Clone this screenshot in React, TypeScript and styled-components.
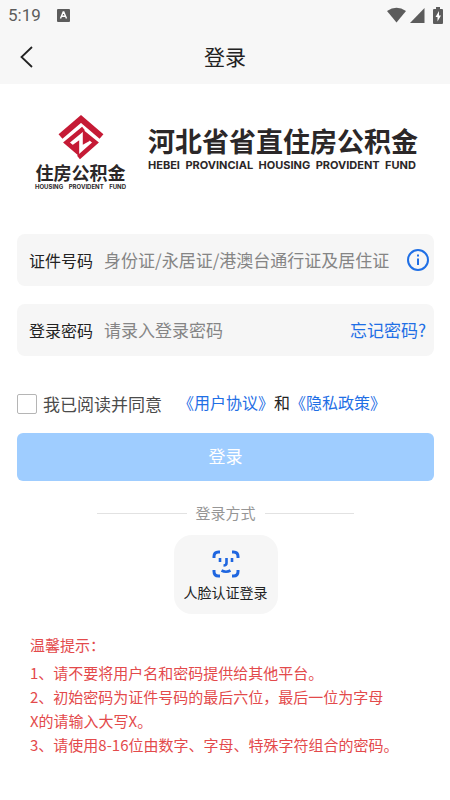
import React from "react";
import styled, { createGlobalStyle } from "styled-components";

const GlobalStyle = createGlobalStyle`
  * { box-sizing: border-box; }
  body {
    margin: 0;
    background: #fff;
    color: #222;
    font-family: "Noto Sans CJK SC", "Noto Sans", sans-serif;
  }
  button, input { font-family: inherit; }
`;

const Page = styled.div`
  display: flex;
  flex-direction: column;
`;

const Header = styled.header`
  background: #f7f7f7;
`;

const StatusBar = styled.div`
  display: flex;
  align-items: center;
  height: 30px;
  padding: 0 7px 0 8px;
  color: #5c5c5c;
`;

const Clock = styled.span`
  margin-right: 16px;
  font: 17px/20px Roboto, sans-serif;
`;

const StatusIcons = styled.div`
  display: flex;
  align-items: center;
  gap: 4px;
  margin-left: auto;
`;

const NavBar = styled.div`
  display: grid;
  grid-template-columns: 54px 1fr 54px;
  align-items: center;
  height: 54px;
`;

const BackButton = styled.button`
  display: flex;
  padding: 8px 19px;
  border: 0;
  background: none;
  color: #222;
`;

const Title = styled.h1`
  margin: 0;
  padding-bottom: 2px;
  text-align: center;
  font-size: 21px;
  line-height: 28px;
  font-weight: 400;
`;

const Brand = styled.section`
  display: flex;
  align-items: flex-start;
  gap: 22px;
  padding: 30px 34px 0 35px;
  color: #2b2728;
`;

const Emblem = styled.div`
  display: flex;
  flex: none;
  flex-direction: column;
  align-items: center;
  width: 91px;
`;

const EmblemName = styled.div`
  margin-bottom: 2px;
  font-size: 18px;
  line-height: 20px;
  font-weight: 700;
`;

const Words = styled.div<{ $small?: boolean }>`
  display: flex;
  justify-content: space-between;
  width: 100%;
  font-family: Inter, sans-serif;
  font-size: ${(p) => (p.$small ? "6px" : "11px")};
  line-height: ${(p) => (p.$small ? "6px" : "12px")};
  font-weight: 700;
`;

const Wordmark = styled.div`
  flex: none;
  width: 268px;
  padding-top: 11px;
`;

const WordmarkName = styled.div`
  margin-bottom: 2px;
  font-size: 27px;
  line-height: 32px;
  font-weight: 700;
  white-space: nowrap;
`;

const Form = styled.form`
  display: flex;
  flex-direction: column;
  padding: 44px 16px 0 17px;
`;

const Field = styled.div`
  display: flex;
  align-items: center;
  height: 52px;
  margin-bottom: 18px;
  padding: 0 4px 0 12px;
  border-radius: 8px;
  background: #f6f6f6;
`;

const FieldLabel = styled.label`
  flex: none;
  width: 75px;
  font-size: 16px;
  line-height: 24px;
`;

const FieldInput = styled.input`
  flex: 1;
  min-width: 0;
  padding: 0;
  border: 0;
  outline: 0;
  background: none;
  font-size: 17px;
  line-height: 26px;
  &::placeholder { color: #858585; opacity: 1; }
`;

const InfoButton = styled.button`
  display: flex;
  padding: 0;
  border: 0;
  background: none;
`;

const Link = styled.a<{ $large?: boolean }>`
  color: #1f6fe5;
  font-size: ${(p) => (p.$large ? "17px" : "16px")};
  line-height: 24px;
  text-decoration: none;
`;

const ForgotLink = styled(Link)`
  margin-right: 4px;
`;

const Agreement = styled.div`
  display: flex;
  align-items: center;
  height: 28px;
  margin: 16px 0 15px;
`;

const Checkbox = styled.input`
  appearance: none;
  flex: none;
  width: 20px;
  height: 20px;
  margin: 0 6px 0 0;
  border: 1px solid #b5b5b5;
  border-radius: 2px;
  background: #fff;
  &:checked { background: #1f6fe5; }
`;

const AgreeLabel = styled.label`
  color: #4b4b4b;
  font-size: 17px;
  line-height: 26px;
`;

const Policies = styled.span`
  align-self: flex-start;
  margin-left: 16px;
  font-size: 16px;
  line-height: 24px;
  white-space: nowrap;
`;

const SubmitButton = styled.button`
  height: 48px;
  padding: 0 0 2px;
  border: 0;
  border-radius: 6px;
  background: #9fcdff;
  color: #fff;
  font-size: 17px;
  line-height: 26px;
`;

const Divider = styled.div`
  display: flex;
  align-items: center;
  gap: 9px;
  margin: 20px 80px 10px;
  color: #969696;
  font-size: 15px;
  line-height: 24px;
  white-space: nowrap;
  &::before, &::after {
    content: "";
    flex: 1;
    height: 1px;
    background: #e2e2e2;
  }
`;

const FaceButton = styled.button`
  display: flex;
  flex-direction: column;
  align-items: center;
  align-self: center;
  gap: 4px;
  width: 104px;
  height: 79px;
  padding: 15px 0 0;
  border: 0;
  border-radius: 18px;
  background: #f6f6f6;
  color: #222;
  font-size: 14px;
  line-height: 20px;
`;

const Tips = styled.section`
  padding: 19px 30px 24px;
  color: #e34a4b;
  font-size: 15px;
  line-height: 24px;
`;

const TipsTitle = styled.h2`
  margin: 0 0 4px;
  font-size: 15px;
  line-height: 24px;
  font-weight: 400;
`;

const Tip = styled.p`
  margin: 0;
`;

const KeyboardIcon = () => (
  <svg width="13" height="13" viewBox="0 0 13 13" aria-hidden="true">
    <rect width="13" height="13" rx="1" fill="#5c5c5c" />
    <path d="M3.5 9.5 6.2 3h.6l2.7 6.5M4.7 7.3h3.6" fill="none" stroke="#fff" strokeWidth="1.4" />
  </svg>
);

const WifiIcon = () => (
  <svg width="19" height="16" viewBox="0 0 19 16" fill="currentColor" aria-hidden="true">
    <path d="M0 4Q9.5-2.5 19 4L9.5 15.5Z" />
  </svg>
);

const SignalIcon = () => (
  <svg width="15" height="15" viewBox="0 0 15 15" fill="currentColor" aria-hidden="true">
    <path d="M14.5 0V15H0Z" />
  </svg>
);

const BatteryIcon = () => (
  <svg width="10" height="17" viewBox="0 0 10 17" aria-hidden="true">
    <path d="M3 0h4v2h2q1 0 1 1v13q0 1-1 1H1q-1 0-1-1V3q0-1 1-1h2Z" fill="#5c5c5c" />
    <path d="M6 4 2.500 10h2v4.500L8 8.500H6Z" fill="#fff" />
  </svg>
);

const BackIcon = () => (
  <svg width="16" height="22" viewBox="0 0 16 22" fill="none" stroke="currentColor" strokeWidth="1.8" aria-hidden="true">
    <path d="M13 1 2.500 11 13 21" />
  </svg>
);

const EmblemIcon = () => (
  <svg width="46" height="48" viewBox="0 0 46 48" fill="none" stroke="#c51a35" strokeWidth="4.4" aria-hidden="true">
    <path d="M2.500 22.500 23 5 43.500 22.500" strokeWidth="6" />
    <path d="M25.500 14.500 8.500 28.500 19 37.500V30.500L15.500 33" />
    <path d="M20.500 43.500 37.500 28.500 27 20V27L30.500 25" />
  </svg>
);

const InfoIcon = () => (
  <svg width="24" height="24" viewBox="0 0 24 24" fill="none" stroke="#1f6fe5" strokeWidth="2" aria-hidden="true">
    <circle cx="12" cy="12" r="10" />
    <path d="M12 10.500V17M12 6.500V8.500" />
  </svg>
);

const FaceIcon = () => (
  <svg width="28" height="28" viewBox="0 0 28 28" fill="none" stroke="#1f66e0" strokeWidth="3" aria-hidden="true">
    <path d="M2 8V6.500Q2 2 6.500 2H8M20 2H21.500Q26 2 26 6.500V8M26 20V21.500Q26 26 21.500 26H20M8 26H6.500Q2 26 2 21.500V20" />
    <path d="M8 8V12M20 8V12M14.500 8V13Q14.500 15.500 11.500 15.500" strokeWidth="2.600" />
    <path d="M9.500 20.500Q14 23 18.500 20.500" strokeWidth="2.600" />
  </svg>
);

const LatinWords = ({ text, small }: { text: string; small?: boolean }) => (
  <Words $small={small}>
    {text.split(" ").map((word) => <span key={word}>{word}</span>)}
  </Words>
);

export default function App() {
  return (
    <>
      <GlobalStyle />
      <Page>
        <Header>
          <StatusBar>
            <Clock>5:19</Clock>
            <KeyboardIcon />
            <StatusIcons>
              <WifiIcon />
              <SignalIcon />
              <span />
              <BatteryIcon />
            </StatusIcons>
          </StatusBar>
          <NavBar>
            <BackButton type="button" aria-label="返回"><BackIcon /></BackButton>
            <Title>登录</Title>
          </NavBar>
        </Header>
        <main>
          <Brand>
            <Emblem>
              <EmblemIcon />
              <EmblemName>住房公积金</EmblemName>
              <LatinWords small text="HOUSING PROVIDENT FUND" />
            </Emblem>
            <Wordmark>
              <WordmarkName>河北省省直住房公积金</WordmarkName>
              <LatinWords text="HEBEI PROVINCIAL HOUSING PROVIDENT FUND" />
            </Wordmark>
          </Brand>
          <Form onSubmit={(e) => e.preventDefault()}>
            <Field>
              <FieldLabel htmlFor="idno">证件号码</FieldLabel>
              <FieldInput id="idno" type="text" placeholder="身份证/永居证/港澳台通行证及居住证" />
              <InfoButton type="button" aria-label="证件说明"><InfoIcon /></InfoButton>
            </Field>
            <Field>
              <FieldLabel htmlFor="password">登录密码</FieldLabel>
              <FieldInput id="password" type="password" placeholder="请录入登录密码" />
              <ForgotLink $large href="#forgot">忘记密码?</ForgotLink>
            </Field>
            <Agreement>
              <Checkbox id="agree" type="checkbox" />
              <AgreeLabel htmlFor="agree">我已阅读并同意</AgreeLabel>
              <Policies>
                <Link href="#terms">《用户协议》</Link>和<Link href="#privacy">《隐私政策》</Link>
              </Policies>
            </Agreement>
            <SubmitButton type="submit">登录</SubmitButton>
            <Divider>登录方式</Divider>
            <FaceButton type="button">
              <FaceIcon />
              人脸认证登录
            </FaceButton>
          </Form>
          <Tips>
            <TipsTitle>温馨提示：</TipsTitle>
            <Tip>1、请不要将用户名和密码提供给其他平台。</Tip>
            <Tip>2、初始密码为证件号码的最后六位，最后一位为字母<br />X的请输入大写X。</Tip>
            <Tip>3、请使用8-16位由数字、字母、特殊字符组合的密码。</Tip>
          </Tips>
        </main>
      </Page>
    </>
  );
}
